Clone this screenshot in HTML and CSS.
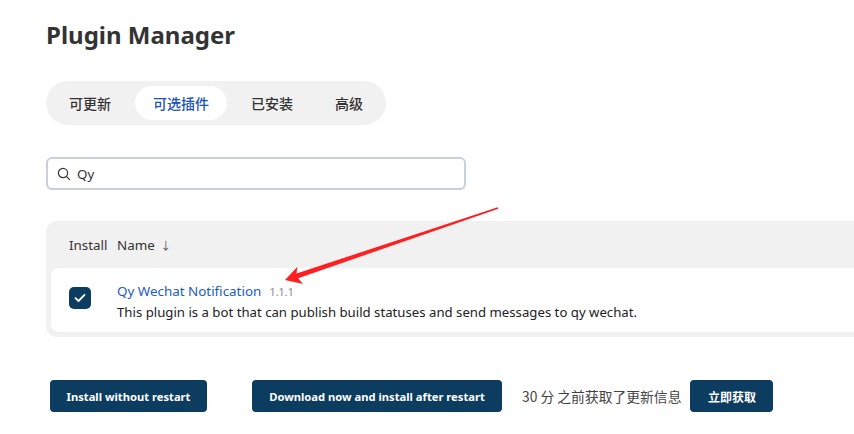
FILE: index.html
```html
<!DOCTYPE html>
<html>
<head>
<meta charset="utf-8">
<link rel="stylesheet" href="styles.css">
</head>
<body>
<div class="page">
  <h1 class="title">Plugin Manager</h1>
  <div class="tabs">
    <span class="tab">可更新</span>
    <span class="tab active">可选插件</span>
    <span class="tab">已安装</span>
    <span class="tab">高级</span>
  </div>
  <div class="search">
    <svg class="search-icon" width="14" height="14" viewBox="0 0 14 14"><circle cx="6" cy="6" r="4.6" fill="none" stroke="#333" stroke-width="1.2"/><path d="M9.4 9.4 L12.6 12.6" stroke="#333" stroke-width="1.2" stroke-linecap="round"/></svg>
    <span class="search-text">Qy</span>
  </div>
  <div class="table">
    <div class="thead">
      <span class="th th-install">Install</span>
      <span class="th">Name <span class="sort">↓</span></span>
    </div>
    <div class="row">
      <div class="cell-check">
        <span class="checkbox"><svg width="12" height="10" viewBox="0 0 12 10"><path d="M1.5 5.2 L4.5 8 L10.5 1.8" fill="none" stroke="#fff" stroke-width="1.8" stroke-linecap="round" stroke-linejoin="round"/></svg></span>
      </div>
      <div class="cell-name">
        <div class="name-line"><a class="plugin-name">Qy Wechat Notification</a><span class="version">1.1.1</span></div>
        <div class="desc">This plugin is a bot that can publish build statuses and send messages to qy wechat.</div>
      </div>
    </div>
  </div>
  <div class="actions">
    <button class="btn btn-first">Install without restart</button>
    <button class="btn btn-second">Download now and install after restart</button>
    <span class="info">30 分 之前获取了更新信息</span>
    <button class="btn btn-cn">立即获取</button>
  </div>
</div>
<svg class="annotation" width="854" height="434" viewBox="0 0 854 434">
  <polygon fill="#fe2020" points="285,280 303,284 298.1,278.2 498.3,208.8 497.7,207.2 296.5,273.5 297.4,266.7"/>
</svg>
</body>
</html>
```
FILE: styles.css
```css
html, body {
  margin: 0;
  padding: 0;
  background: #fff;
  width: 854px;
  height: 434px;
  overflow: hidden;
}
body {
  font-family: "Noto Sans", "Noto Sans CJK SC", sans-serif;
  color: #333;
  position: relative;
}
.page {
  padding-left: 46px;
}
.title {
  margin: 0;
  padding-top: 18px;
  font-size: 24px;
  line-height: 34px;
  font-weight: 700;
  color: #333;
}
.tabs {
  margin-top: 29px;
  width: 340px;
  box-sizing: border-box;
  height: 44px;
  padding: 5px;
  background: #f1f1f1;
  border-radius: 22px;
  display: flex;
  gap: 6px;
}
.tab {
  font-family: "Noto Sans CJK SC", sans-serif;
  font-size: 14px;
  font-weight: 500;
  padding: 0 18px;
  line-height: 34px;
  border-radius: 17px;
  color: #333;
}
.tab.active {
  background: #fff;
  color: #1953b6;
}
.search {
  margin-top: 32px;
  width: 420px;
  height: 33px;
  box-sizing: border-box;
  border: 2px solid #c8d0d8;
  border-radius: 6px;
  display: flex;
  align-items: center;
  padding-left: 9px;
  gap: 6px;
}
.search-text {
  font-size: 13.4px;
  color: #333;
}
.table {
  margin-top: 31px;
  background: #f1f1f1;
  border-radius: 10px 0 0 10px;
  padding: 0 0 5px 5px;
}
.thead {
  height: 47px;
  display: flex;
  align-items: center;
  font-size: 13.4px;
  color: #333;
}
.th-install {
  padding-left: 18px;
  width: 48px;
}
.sort {
  font-size: 11px;
  color: #555;
  margin-left: 2px;
}
.row {
  background: #fff;
  border-radius: 8px 0 0 8px;
  height: 64px;
  display: flex;
}
.cell-check {
  width: 66px;
  padding-left: 18px;
  box-sizing: border-box;
  padding-top: 19px;
}
.checkbox {
  width: 22px;
  height: 22px;
  background: #0c3c5f;
  border-radius: 5px;
  display: flex;
  align-items: center;
  justify-content: center;
}
.cell-name {
  padding-top: 13px;
}
.name-line {
  display: flex;
  align-items: baseline;
  gap: 8px;
  line-height: 21px;
}
.plugin-name {
  color: #1a5bc7;
  font-size: 13.4px;
}
.version {
  color: #8c8c8c;
  font-size: 11.5px;
  letter-spacing: -0.3px;
}
.desc {
  font-size: 13.2px;
  line-height: 20px;
  color: #222;
}
.actions {
  margin-top: 43px;
  display: flex;
  align-items: center;
}
.btn {
  font-family: "Noto Sans", "Noto Sans CJK SC", sans-serif;
  background: #0c3c5f;
  color: #fff;
  border: none;
  border-radius: 4px;
  height: 32px;
  font-size: 11.2px;
  font-weight: 700;
  padding: 0;
  white-space: nowrap;
}
.btn-first {
  margin-left: 4px;
  width: 157px;
}
.btn-second {
  margin-left: 45px;
  width: 250px;
}
.info {
  font-family: "Noto Sans CJK SC", sans-serif;
  margin-left: 20px;
  font-size: 13.8px;
  color: #444;
}
.btn-cn {
  font-family: "Noto Sans CJK SC", sans-serif;
  margin-left: 9px;
  width: 83px;
  font-size: 12px;
}
.annotation {
  position: absolute;
  left: 0;
  top: 0;
  pointer-events: none;
}
```
